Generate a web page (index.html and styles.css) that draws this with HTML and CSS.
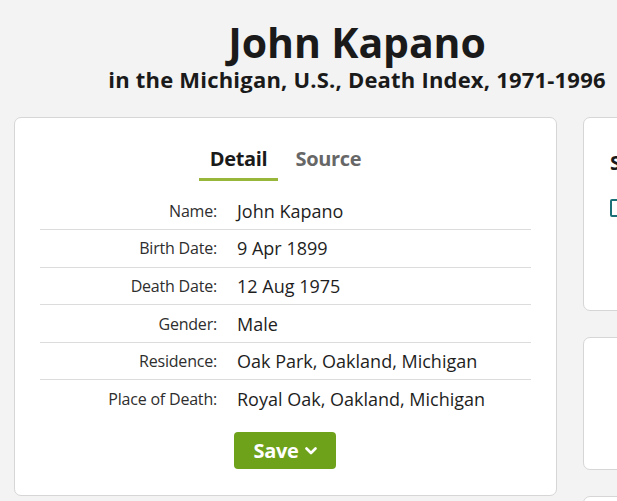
FILE: index.html
```html
<!DOCTYPE html>
<html lang="en">
<head>
<meta charset="utf-8">
<title>John Kapano</title>
<link rel="stylesheet" href="styles.css">
</head>
<body>
<div class="page">
  <header class="header">
    <h1 class="title">John Kapano</h1>
    <p class="subtitle">in the Michigan, U.S., Death Index, 1971-1996</p>
  </header>
  <div class="columns">
    <section class="card main-card">
      <nav class="tabs">
        <span class="tab tab-active">Detail</span>
        <span class="tab">Source</span>
      </nav>
      <table class="facts">
        <tr><th>Name:</th><td>John Kapano</td></tr>
        <tr><th>Birth Date:</th><td>9 Apr 1899</td></tr>
        <tr><th>Death Date:</th><td>12 Aug 1975</td></tr>
        <tr><th>Gender:</th><td>Male</td></tr>
        <tr><th>Residence:</th><td>Oak Park, Oakland, Michigan</td></tr>
        <tr><th>Place of Death:</th><td>Royal Oak, Oakland, Michigan</td></tr>
      </table>
      <div class="actions">
        <button class="save-btn">Save <svg class="chev" viewBox="0 0 12 8" width="12" height="8"><path d="M1.5 1.5 L6 6 L10.5 1.5" fill="none" stroke="#fff" stroke-width="2.6" stroke-linecap="round" stroke-linejoin="round"/></svg></button>
      </div>
    </section>
    <aside class="side">
      <section class="card side-card side-card-1">
        <h2 class="side-title">Source</h2>
        <span class="side-btn">Search</span>
      </section>
      <section class="card side-card side-card-2"></section>
      <section class="card side-card side-card-3"></section>
    </aside>
  </div>
</div>
</body>
</html>
```
FILE: styles.css
```css
html, body {
  margin: 0;
  padding: 0;
  background: #f3f3f3;
  overflow: hidden;
}
body {
  font-family: "Open Sans", "Lato", sans-serif;
  color: #222;
}
.page {
  width: 686px;
  margin-left: 14px;
}
.header {
  text-align: center;
  padding-top: 18px;
  height: 117px;
  box-sizing: border-box;
}
.title {
  margin: 0;
  font-size: 41px;
  line-height: 48px;
  font-weight: 700;
  color: #1a1a1a;
  letter-spacing: -0.1px;
}
.subtitle {
  margin: 0;
  font-size: 22px;
  line-height: 26px;
  font-weight: 700;
  color: #1a1a1a;
  letter-spacing: 0.2px;
}
.columns {
  display: flex;
  gap: 26px;
  align-items: flex-start;
}
.card {
  background: #fff;
  border: 1px solid #d6d6d6;
  border-radius: 7px;
  box-sizing: border-box;
  flex-shrink: 0;
}
.main-card {
  width: 543px;
  height: 379px;
  padding: 26px 25px 0;
}
.tabs {
  display: flex;
  justify-content: center;
  gap: 6px;
}
.tab {
  font-size: 20px;
  font-weight: 700;
  color: #676767;
  padding: 0 11px;
  line-height: 30px;
  padding-bottom: 4px;
  border-bottom: 3px solid transparent;
  letter-spacing: -0.3px;
}
.tab-active {
  color: #1a1a1a;
  border-bottom-color: #98b63a;
}
.facts {
  width: 100%;
  border-collapse: collapse;
  margin-top: 11px;
}
.facts tr {
  height: 37.6px;
}
.facts tr + tr {
  border-top: 1px solid #dcdcdc;
}
.facts th {
  width: 177px;
  text-align: right;
  font-weight: 400;
  font-size: 16px;
  color: #2e2e2e;
  padding: 0;
  white-space: nowrap;
  letter-spacing: -0.2px;
}
.facts td {
  font-size: 18px;
  color: #1e1e1e;
  padding: 0 0 0 20px;
  white-space: nowrap;
  letter-spacing: 0;
}
.actions {
  display: flex;
  justify-content: center;
  margin-top: 14px;
  padding-right: 1px;
}
.save-btn {
  display: flex;
  align-items: center;
  gap: 6px;
  height: 37px;
  width: 102px;
  justify-content: center;
  background: #6ea21a;
  color: #fff;
  border: none;
  border-radius: 4px;
  font-family: inherit;
  font-size: 20px;
  font-weight: 700;
  padding: 0;
  letter-spacing: -0.3px;
}
.chev {
  margin-top: 1px;
}
.side {
  display: flex;
  flex-direction: column;
  gap: 26px;
  width: 200px;
  flex-shrink: 0;
}
.side-card {
  width: 200px;
  padding: 30px 26px 0;
}
.side-card-1 { height: 194px; }
.side-card-2 { height: 133px; }
.side-card-3 { height: 60px; }
.side-title {
  margin: 0;
  font-size: 20px;
  font-weight: 700;
  line-height: 30px;
  color: #1a1a1a;
}
.side-btn {
  display: inline-block;
  margin-top: 21px;
  border: 2px solid #1b6f77;
  border-radius: 2px;
  color: #1b6f77;
  font-size: 15px;
  line-height: 14px;
  padding: 0 12px;
}
```
